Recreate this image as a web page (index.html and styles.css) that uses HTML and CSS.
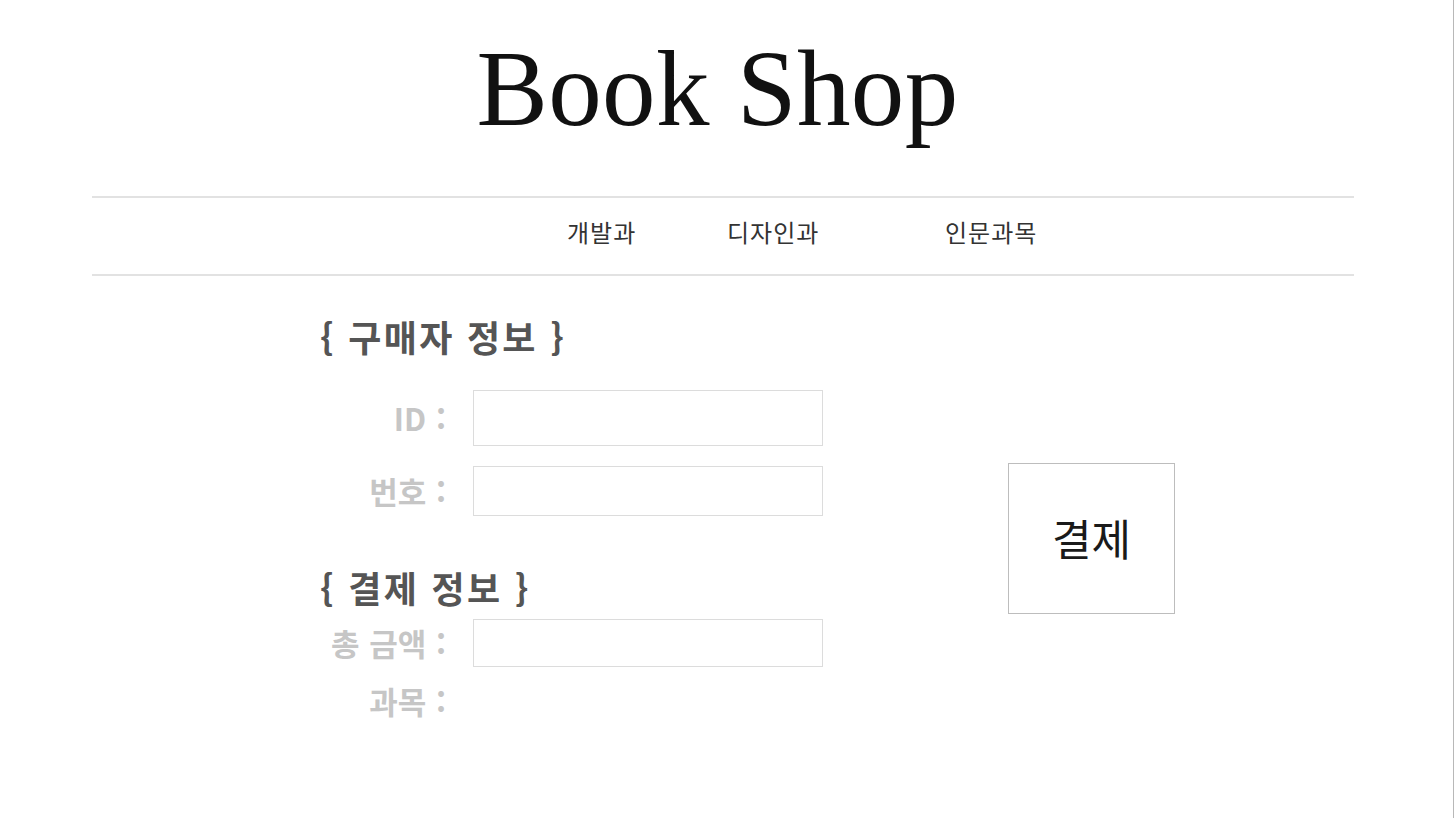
FILE: index.html
```html
<!DOCTYPE html>
<html lang="ko">
<head>
<meta charset="utf-8">
<title>Book Shop</title>
<link rel="stylesheet" href="styles.css">
</head>
<body>
<div class="page">
  <header class="masthead">
    <h1 class="brand">Book Shop</h1>
  </header>
  <nav class="menu">
    <ul class="menu-list">
      <li class="menu-item">개발과</li>
      <li class="menu-item">디자인과</li>
      <li class="menu-item">인문과목</li>
    </ul>
  </nav>
  <main class="checkout">
    <form class="order-form">
      <h2 class="section-title">{ 구매자 정보 }</h2>
      <div class="fields fields-buyer">
        <label class="field-label" for="uid">ID :</label>
        <input class="field-input input-id" id="uid" type="text">
        <label class="field-label" for="phone">번호 :</label>
        <input class="field-input input-phone" id="phone" type="text">
      </div>
      <h2 class="section-title section-pay">{ 결제 정보 }</h2>
      <div class="fields fields-pay">
        <label class="field-label" for="total">총 금액 :</label>
        <input class="field-input input-total" id="total" type="text">
        <span class="field-label label-subject">과목 :</span>
        <span class="field-value"></span>
      </div>
    </form>
    <div class="pay-col">
      <button class="pay-button" type="button">결제</button>
    </div>
  </main>
</div>
</body>
</html>
```
FILE: styles.css
```css
html, body {
  margin: 0;
  padding: 0;
  background: #ffffff;
}

.page {
  box-sizing: border-box;
  width: 100%;
  min-height: 100vh;
  border-right: 1px solid #b8b8b8;
  font-family: "Noto Sans CJK KR", "Noto Sans", sans-serif;
}

.masthead {
  padding-top: 36px;
  text-align: center;
}

.brand {
  margin: 0;
  font-family: "Liberation Serif", "Times New Roman", serif;
  font-weight: 400;
  font-size: 107px;
  line-height: 107px;
  color: #111;
  letter-spacing: 0.4px;
  padding-right: 18px;
}

.menu {
  margin: 53px 99px 0 92px;
  border-top: 2px solid #e2e2e2;
  border-bottom: 2px solid #e2e2e2;
}

.menu-list {
  list-style: none;
  margin: 0;
  padding: 19px 0 27px 475px;
  display: grid;
  grid-template-columns: 160px 218px auto;
}

.menu-item {
  font-size: 24px;
  line-height: 30px;
  letter-spacing: 1px;
  color: #333;
  font-weight: 400;
}

.checkout {
  display: flex;
  align-items: flex-start;
  padding-left: 320px;
  gap: 186px;
}

.order-form {
  width: 502px;
  margin: 0;
  padding-top: 39px;
}

.section-title {
  margin: 0;
  font-size: 36px;
  line-height: 42px;
  letter-spacing: 2.3px;
  font-weight: 700;
  color: #555;
}

.section-pay {
  margin-top: 50px;
}

.fields {
  display: grid;
  grid-template-columns: 130px 350px;
  column-gap: 23px;
  align-items: center;
}

.fields-buyer {
  margin-top: 33px;
  row-gap: 20px;
}

.fields-pay {
  margin-top: 11px;
  row-gap: 16px;
}

.field-label {
  text-align: right;
  font-size: 31px;
  line-height: 36px;
  font-weight: 700;
  color: #c6c6c6;
  white-space: nowrap;
  word-spacing: 1px;
  margin-right: 4px;
}

.field-input {
  box-sizing: border-box;
  width: 350px;
  margin: 0;
  padding: 0 10px;
  border: 1px solid #dcdcdc;
  background: #fff;
  font: inherit;
  font-size: 18px;
  outline: none;
}

.input-id { height: 56px; }
.input-phone { height: 50px; }
.input-total { height: 48px; }

.pay-col {
  padding-top: 187px;
}

.pay-button {
  box-sizing: border-box;
  width: 167px;
  height: 151px;
  margin: 0;
  padding: 0 0 4px;
  border: 1px solid #bdbdbd;
  background: #fff;
  font-family: "Noto Sans CJK KR", "Noto Sans", sans-serif;
  font-size: 43px;
  font-weight: 400;
  color: #1a1a1a;
  cursor: pointer;
}
```
